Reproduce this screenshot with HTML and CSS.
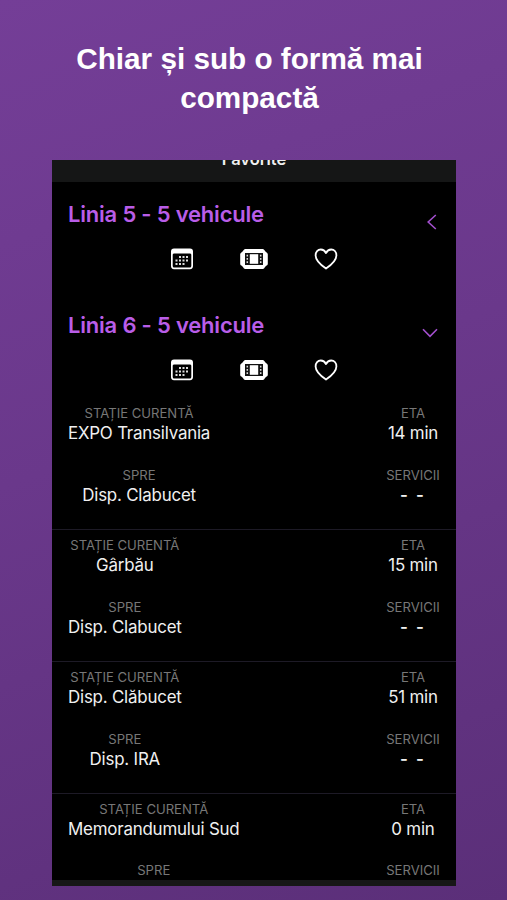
FILE: index.html
```
<!DOCTYPE html>
<html lang="ro">
<head>
<meta charset="utf-8">
<title>Favorite</title>
<link rel="stylesheet" href="styles.css">
</head>
<body>
<svg width="0" height="0" class="defs" aria-hidden="true">
  <symbol id="calendar" viewBox="0 0 24 22">
    <path fill="#fff" fill-rule="evenodd" d="M4 .5h16a3 3 0 0 1 3 3V18a3.200 3.200 0 0 1-3 3.200H4A3.200 3.200 0 0 1 1 18V3.500a3 3 0 0 1 3-3ZM2.700 7v10.700c0 1.200.7 1.900 1.900 1.900h14.800c1.200 0 1.900-.7 1.900-1.900V7c0-1-.6-1.500-1.600-1.500H4.300c-1 0-1.600.5-1.600 1.500Z"/>
    <path stroke="#ddd" stroke-width="2" stroke-dasharray="2 1.500" d="M9 8.900h9.500M5.500 12.400h13M5.500 16h9"/>
  </symbol>
  <symbol id="ticket" viewBox="0 0 28 20">
    <path fill="#fff" d="M6 0h16c1.200 0 1.900.3 2.500 1.300.6.900 1.200 1.500 2.100 2.100.9.600 1.200 1.200 1.200 2.200v8.800c0 1-.3 1.600-1.200 2.200-.9.600-1.500 1.200-2.100 2.100-.6 1-1.300 1.300-2.500 1.300H6c-1.200 0-1.900-.3-2.500-1.300-.6-.9-1.200-1.500-2.100-2.100-.9-.6-1.200-1.200-1.200-2.200V5.600c0-1 .3-1.600 1.200-2.200.9-.6 1.500-1.200 2.100-2.100C4.100.3 4.800 0 6 0Z"/>
    <path fill="#111" d="M5 4h18v12H5z"/>
    <path fill="#fff" d="M9.800 5.200h8.400v9.600H9.800z"/>
    <path stroke="#ddd" stroke-width="1.500" stroke-dasharray="1.800 1.500" d="M7.300 5.700v9.300M20.700 5.700v9.300"/>
  </symbol>
  <symbol id="heart" viewBox="0 0 24 22">
    <path fill="none" stroke="#fff" stroke-width="1.800" stroke-linejoin="round" d="M12 20.500C6.500 16.700 1.600 12.600 1.600 7.400c0-3.400 2.200-5.900 5.200-5.900 2.300 0 4.100 1.300 5.200 3.500 1.100-2.200 2.900-3.500 5.200-3.500 3 0 5.200 2.500 5.200 5.900 0 5.200-4.900 9.300-10.400 13.100Z"/>
  </symbol>
</svg>
<h1 class="title">Chiar și sub o formă mai<br>compactă</h1>
<main class="screen">
  <header class="nav"><span>Favorite</span></header>
  <section class="line">
    <div class="line-head"><h2>Linia 5 - 5 vehicule</h2>
      <svg class="chevron left" viewBox="0 0 10 16"><path d="M8.800 1 1.200 8l7.600 7"/></svg></div>
    <div class="actions"><svg class="cal"><use href="#calendar"/></svg><svg class="tick"><use href="#ticket"/></svg><svg class="heart"><use href="#heart"/></svg></div>
  </section>
  <section class="line">
    <div class="line-head"><h2>Linia 6 - 5 vehicule</h2>
      <svg class="chevron down" viewBox="0 0 16 10"><path d="m1 1.200 7 7.100 7-7.100"/></svg></div>
    <div class="actions"><svg class="cal"><use href="#calendar"/></svg><svg class="tick"><use href="#ticket"/></svg><svg class="heart"><use href="#heart"/></svg></div>
  </section>
  <article class="vehicle first">
    <dl><dt>STAȚIE CURENTĂ</dt><dd>EXPO Transilvania</dd><dt>SPRE</dt><dd>Disp. Clabucet</dd></dl>
    <dl class="eta"><dt>ETA</dt><dd>14 min</dd><dt>SERVICII</dt><dd class="dash">- -</dd></dl>
  </article>
  <article class="vehicle">
    <dl><dt>STAȚIE CURENTĂ</dt><dd>Gârbău</dd><dt>SPRE</dt><dd>Disp. Clabucet</dd></dl>
    <dl class="eta"><dt>ETA</dt><dd>15 min</dd><dt>SERVICII</dt><dd class="dash">- -</dd></dl>
  </article>
  <article class="vehicle">
    <dl><dt>STAȚIE CURENTĂ</dt><dd>Disp. Clăbucet</dd><dt>SPRE</dt><dd>Disp. IRA</dd></dl>
    <dl class="eta"><dt>ETA</dt><dd>51 min</dd><dt>SERVICII</dt><dd class="dash">- -</dd></dl>
  </article>
  <article class="vehicle last">
    <dl><dt>STAȚIE CURENTĂ</dt><dd>Memorandumului Sud</dd><dt>SPRE</dt></dl>
    <dl class="eta"><dt>ETA</dt><dd>0 min</dd><dt>SERVICII</dt></dl>
  </article>
  <footer class="tabbar"></footer>
</main>
</body>
</html>
```
FILE: styles.css
```
* { box-sizing: border-box; }
body {
  margin: 0;
  height: 900px;
  overflow: hidden;
  background: linear-gradient(160deg, #743e97 0%, #6a388b 45%, #5b2f79 100%);
  font-family: Inter, "Liberation Sans", sans-serif;
  color: #f0f0f0;
}
.defs { position: absolute; }
.title {
  margin: 0;
  padding: 39px 8px 0 0;
  height: 160px;
  text-align: center;
  font: bold 29.700px/39px "Liberation Sans", Arial, sans-serif;
  color: #fff;
}
.screen {
  width: 404px;
  height: 726px;
  margin-left: 52px;
  background: #000;
  display: flex;
  flex-direction: column;
  overflow: hidden;
}
.nav {
  height: 22px;
  flex: none;
  background: #151616;
  overflow: hidden;
  text-align: center;
  font-size: 16.500px;
  font-weight: 600;
  line-height: 20px;
}
.nav span { display: block; margin-top: -11px; }
.line { height: 111px; flex: none; padding: 18px 16px 0; }
.line-head { display: flex; justify-content: space-between; height: 47.500px; }
.line-head h2 {
  margin: 0;
  font-size: 22px;
  font-weight: 640;
  line-height: 28px;
  letter-spacing: -0.200px;
  color: #b95de8;
}
.chevron { fill: none; stroke: #a34fce; stroke-width: 1.600; }
.left { width: 10px; height: 16px; margin: 14px 3px 0 0; }
.down { width: 16px; height: 10px; margin: 17px 2px 0 0; }
.actions { display: flex; align-items: center; height: 22px; padding-left: 102px; }
.cal { width: 24px; height: 22px; }
.tick { width: 28px; height: 20px; margin-left: 46px; }
.heart { width: 24px; height: 22px; margin-left: 45.500px; }
.vehicle {
  height: 131.800px;
  flex: none;
  display: flex;
  justify-content: space-between;
  padding: 6.200px 16px 0;
  border-bottom: 1px solid #1d1a26;
}
.first { height: 126px; padding-top: 0.400px; }
.last { flex: 1; min-height: 0; border: 0; }
dl { margin: 0; text-align: center; }
dt {
  font-size: 13.100px;
  line-height: 18px;
  color: #777;
}
dd {
  margin: 0 0 20.700px;
  font-size: 16.900px;
  line-height: 23px;
  letter-spacing: -0.200px;
}
.eta { width: 54px; }
.eta dt, .eta dd { white-space: nowrap; }
.eta .dash { letter-spacing: 2px; font-weight: 600; }
.tabbar { height: 6px; flex: none; background: #171717; }
```
